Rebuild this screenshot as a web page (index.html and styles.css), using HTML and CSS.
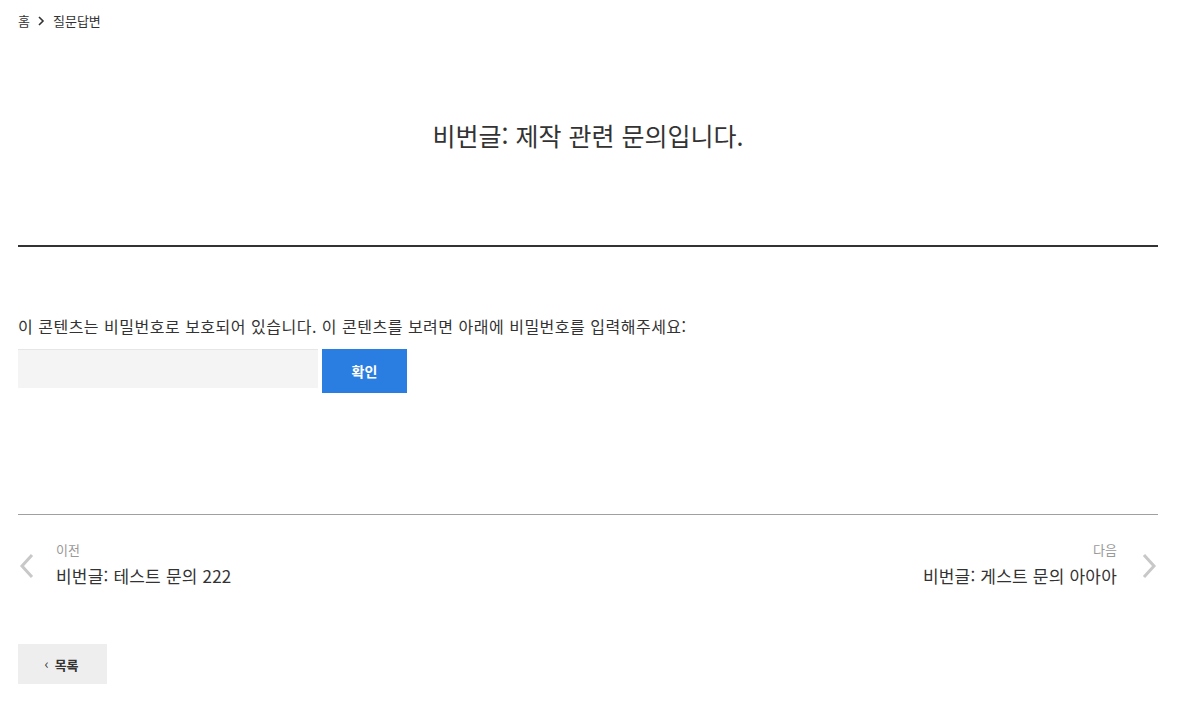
FILE: index.html
```html
<!DOCTYPE html>
<html lang="ko">
<head>
    <meta charset="UTF-8" />
    <meta name="viewport" content="width=device-width, initial-scale=1" />
    <title>질문답변</title>
    <link rel="stylesheet" href="styles.css">
</head>
<body>
    <div class="page">
        <nav class="breadcrumb">
            <a href="#">홈</a>
            <svg class="crumb-sep" width="8" height="10" viewBox="0 0 8 10"><path d="M2 1 L6 5 L2 9" fill="none" stroke="#333" stroke-width="1.6"/></svg>
            <a href="#">질문답변</a>
        </nav>

        <header class="post-head">
            <h1>비번글: 제작 관련 문의입니다.</h1>
        </header>

        <section class="post-body">
            <p>이 콘텐츠는 비밀번호로 보호되어 있습니다. 이 콘텐츠를 보려면 아래에 비밀번호를 입력해주세요:</p>
            <form class="pw-form">
                <input type="password" class="pw-input" />
                <button type="submit" class="pw-submit">확인</button>
            </form>
        </section>

        <nav class="post-nav">
            <a href="#" class="nav-item prev">
                <svg class="nav-arrow" width="16" height="26" viewBox="0 0 16 26"><path d="M13 2 L3 13 L13 24" fill="none" stroke="#c8c8c8" stroke-width="3"/></svg>
                <span class="nav-text">
                    <span class="nav-label">이전</span>
                    <span class="nav-title">비번글: 테스트 문의 222</span>
                </span>
            </a>
            <a href="#" class="nav-item next">
                <span class="nav-text">
                    <span class="nav-label">다음</span>
                    <span class="nav-title">비번글: 게스트 문의 아아아</span>
                </span>
                <svg class="nav-arrow" width="16" height="26" viewBox="0 0 16 26"><path d="M3 2 L13 13 L3 24" fill="none" stroke="#c8c8c8" stroke-width="3"/></svg>
            </a>
        </nav>

        <a href="#" class="list-btn"><span class="list-arrow">&lsaquo;</span> 목록</a>
    </div>
</body>
</html>
```

FILE: styles.css
```css
body {
    font-family: "Noto Sans CJK KR", "Noto Sans", sans-serif;
    background-color: #fff;
    margin: 0;
    color: #333;
}
a {
    color: inherit;
    text-decoration: none;
}
.page {
    padding: 0 22px 0 18px;
}

/* breadcrumb */
.breadcrumb {
    display: flex;
    align-items: center;
    gap: 8px;
    padding-top: 11px;
    font-size: 13px;
    line-height: 20px;
    color: #333;
}
.crumb-sep {
    margin-left: -1px;
}

/* title */
.post-head {
    margin-top: 88px;
    padding-bottom: 94px;
    border-bottom: 2px solid #333;
}
.post-head h1 {
    margin: 0;
    text-align: center;
    font-size: 25px;
    font-weight: 400;
    line-height: 32px;
    color: #333;
}

/* password */
.post-body {
    padding-top: 67px;
}
.post-body p {
    margin: 0;
    font-size: 16px;
    letter-spacing: 0.5px;
    line-height: 24px;
}
.pw-form {
    display: flex;
    align-items: flex-start;
    gap: 4px;
    margin-top: 11px;
}
.pw-input {
    width: 300px;
    height: 39px;
    box-sizing: border-box;
    border: none;
    border-top: 1px solid #e6e6e6;
    background: #f4f4f4;
    outline: none;
}
.pw-submit {
    width: 85px;
    height: 44px;
    border: none;
    background: #2a7de1;
    color: #fff;
    font-family: inherit;
    font-size: 14px;
    font-weight: 700;
    cursor: pointer;
}

/* prev / next */
.post-nav {
    display: flex;
    justify-content: space-between;
    margin-top: 121px;
    padding-top: 26px;
    border-top: 1px solid #a0a0a0;
}
.nav-item {
    display: flex;
    align-items: center;
    gap: 21px;
}
.nav-item.prev .nav-arrow {
    margin-left: 1px;
    margin-top: 2px;
}
.nav-item.next {
    gap: 24px;
}
.nav-item.next .nav-arrow {
    margin-right: 1px;
    margin-top: 2px;
}
.nav-text {
    display: flex;
    flex-direction: column;
}
.nav-item.next .nav-text {
    align-items: flex-end;
}
.nav-label {
    font-size: 13px;
    line-height: 18px;
    color: #999;
}
.nav-title {
    margin-top: 4px;
    font-size: 17px;
    letter-spacing: 0.2px;
    line-height: 26px;
    color: #333;
}

/* list button */
.list-btn {
    display: inline-flex;
    align-items: center;
    justify-content: center;
    gap: 6px;
    width: 89px;
    height: 40px;
    margin-top: 55px;
    background: #eeeeee;
    font-size: 13px;
    font-weight: 700;
    color: #333;
}
.list-arrow {
    font-weight: 400;
    font-size: 14px;
    margin-top: -2px;
    margin-left: -2px;
}
```
